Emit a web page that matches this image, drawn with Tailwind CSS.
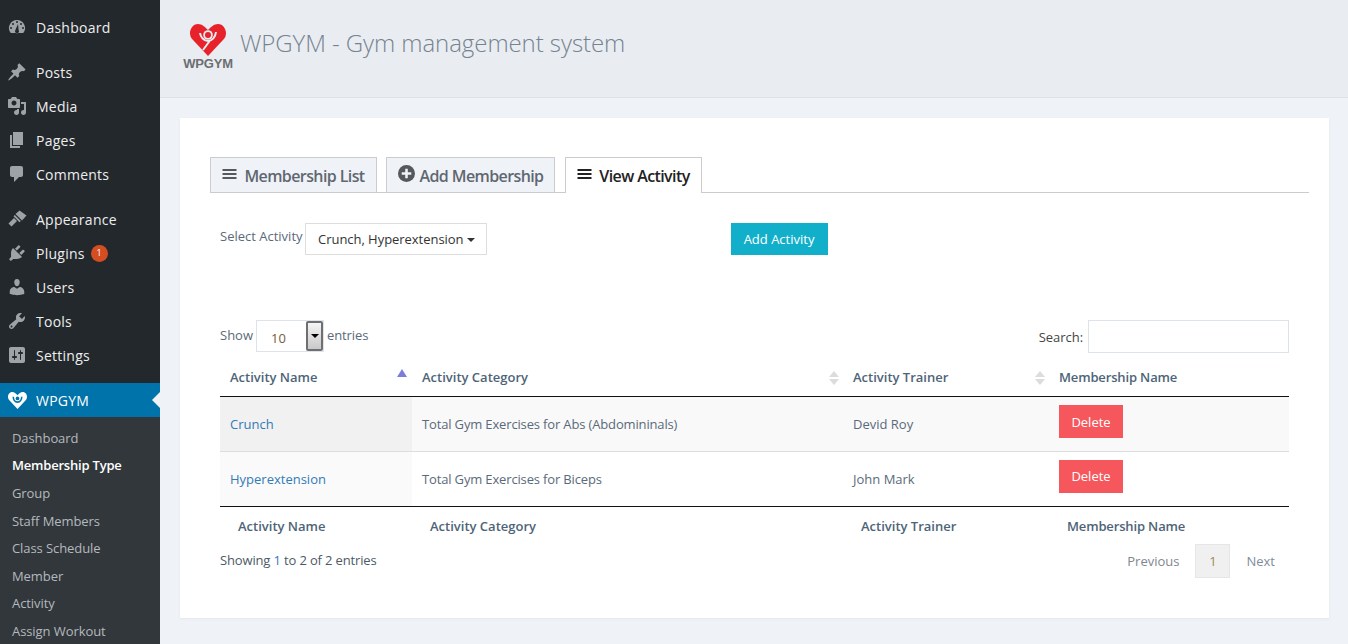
<!DOCTYPE html>
<html lang="en">
<head>
<meta charset="utf-8">
<title>WPGYM</title>
<script src="https://cdn.jsdelivr.net/npm/@tailwindcss/browser@4"></script>
</head>
<body class="bg-[#eff3f8] font-['Open_Sans',sans-serif] text-[#5a6a7a] overflow-hidden">
<div class="flex w-[1348px] h-[644px] overflow-hidden">
  <aside class="w-[160px] shrink-0 bg-[#23282d] text-[#eeeeee] text-[14px] tracking-[0.25px] overflow-hidden">
    <nav class="pt-[11px]">
      <a class="flex items-center h-[34px] pb-[2px]"><span class="w-[36px] pl-[7px]"><svg viewBox="0 0 20 20" class="block w-[20px] h-[20px] fill-[#9ea3a8]"><path fill-rule="evenodd" d="M10 3a8 8 0 0 0-6.240 13h12.480A8 8 0 0 0 10 3zM10 4a1 1 0 1 1 0 2 1 1 0 0 1 0-2zM6 6a1 1 0 1 1 0 2 1 1 0 0 1 0-2zM14 6a1 1 0 1 1 0 2 1 1 0 0 1 0-2zM4 10a1 1 0 1 1 0 2 1 1 0 0 1 0-2zM16 10a1 1 0 1 1 0 2 1 1 0 0 1 0-2zM11 7l.6 6a2 2 0 1 1-3.200 0z"/></svg></span>Dashboard</a>
      <div class="h-[11px]"></div>
      <a class="flex items-center h-[34px] pb-[2px]"><span class="w-[36px] pl-[7px]"><svg viewBox="0 0 20 20" class="block w-[20px] h-[20px] fill-[#9ea3a8]"><path d="M10.440 3.020l1.820-1.820 6.360 6.350-1.830 1.820c-1.050-.68-2.480-.57-3.410.36l-.75.75c-.92.93-1.040 2.350-.35 3.410l-1.830 1.820-2.410-2.410-2.800 2.790c-.42.42-3.380 2.710-3.800 2.290s1.860-3.390 2.280-3.810l2.790-2.790L4.100 9.360l1.830-1.820c1.050.69 2.480.57 3.400-.36l.75-.75c.93-.92 1.050-2.350.36-3.410z"/></svg></span>Posts</a>
      <a class="flex items-center h-[34px] pb-[2px]"><span class="w-[36px] pl-[7px]"><svg viewBox="0 0 20 20" class="block w-[20px] h-[20px] fill-[#9ea3a8]"><path d="M13 11V4c0-.55-.45-1-1-1h-1.670L9 1H5L3.670 3H2c-.55 0-1 .45-1 1v7c0 .55.45 1 1 1h10c.55 0 1-.45 1-1zM7 4.500c1.380 0 2.500 1.120 2.500 2.500S8.380 9.500 7 9.500 4.500 8.380 4.500 7 5.620 4.500 7 4.500zM14 6h5v10.500c0 1.380-1.120 2.500-2.500 2.500S14 17.880 14 16.500s1.120-2.500 2.500-2.500c.17 0 .34.020.5.050V8h-3V6zm-4 8.050V13h2v3.500c0 1.380-1.120 2.500-2.500 2.500S7 17.880 7 16.500 8.120 14 9.500 14c.17 0 .34.020.5.050z"/></svg></span>Media</a>
      <a class="flex items-center h-[34px] pb-[2px]"><span class="w-[36px] pl-[7px]"><svg viewBox="0 0 20 20" class="block w-[20px] h-[20px] fill-[#9ea3a8]"><path d="M6 15V2h10v13H6zm-1 1h8v2H3V5h2v11z"/></svg></span>Pages</a>
      <a class="flex items-center h-[34px] pb-[2px]"><span class="w-[36px] pl-[7px]"><svg viewBox="0 0 20 20" class="block w-[20px] h-[20px] fill-[#9ea3a8]"><path d="M5 2h9c1.100 0 2 .9 2 2v7c0 1.100-.9 2-2 2h-2l-5 5v-5H5c-1.100 0-2-.9-2-2V4c0-1.100.9-2 2-2z"/></svg></span>Comments</a>
      <div class="h-[11px]"></div>
      <a class="flex items-center h-[34px] pb-[2px]"><span class="w-[36px] pl-[7px]"><svg viewBox="0 0 20 20" class="block w-[20px] h-[20px] fill-[#9ea3a8]"><path d="M8.500 5L12.500 1.500 19.500 6.500 15 11.500z"/><path d="M7.800 6l6 6-1.300 1.200-6-6z"/><path d="M7 9l3 3-5.500 5.500-3-3z"/></svg></span>Appearance</a>
      <a class="flex items-center h-[34px] pb-[2px]"><span class="w-[36px] pl-[7px]"><svg viewBox="0 0 20 20" class="block w-[20px] h-[20px] fill-[#9ea3a8]"><path d="M13.110 4.360L9.870 7.600 8 5.730l3.240-3.240c.35-.34 1.050-.2 1.560.32.52.51.66 1.210.31 1.550zm-8 1.770l.91-1.120 9.010 9.010-1.190.84c-.71.71-2.630 1.160-3.820 1.160H6.140L4.900 17.260c-.59.59-1.540.59-2.120 0-.59-.58-.59-1.530 0-2.120l1.240-1.240v-3.880c0-1.130.4-3.190 1.090-3.890zm7.260 3.970l3.240-3.240c.34-.35 1.040-.21 1.550.31.52.51.66 1.210.31 1.550l-3.240 3.250z"/></svg></span>Plugins<span class="ml-[6px] w-[17px] h-[17px] rounded-full bg-[#d54e21] text-white text-[9px] tracking-normal flex items-center justify-center">1</span></a>
      <a class="flex items-center h-[34px] pb-[2px]"><span class="w-[36px] pl-[7px]"><svg viewBox="0 0 20 20" class="block w-[20px] h-[20px] fill-[#9ea3a8]"><path d="M10 9.250c-2.270 0-2.730-3.440-2.730-3.440C7 4.020 7.820 2 9.970 2c2.160 0 2.980 2.020 2.710 3.810 0 0-.41 3.440-2.680 3.440zm0 2.570L12.720 10c2.390 0 4.520 2.330 4.520 4.530v2.490s-3.650 1.130-7.240 1.130c-3.650 0-7.240-1.130-7.240-1.130v-2.490c0-2.250 1.940-4.480 4.470-4.480z"/></svg></span>Users</a>
      <a class="flex items-center h-[34px] pb-[2px]"><span class="w-[36px] pl-[7px]"><svg viewBox="0 0 20 20" class="block w-[20px] h-[20px] fill-[#9ea3a8]"><path d="M16.680 9.770c-1.340 1.340-3.300 1.670-4.950.99l-5.410 6.520c-.99.99-2.590.99-3.580 0s-.99-2.590 0-3.570l6.520-5.420c-.68-1.650-.35-3.610.99-4.950 1.280-1.280 3.120-1.620 4.720-1.060l-2.890 2.890 2.820 2.820 2.860-2.870c.53 1.580.18 3.390-1.080 4.650zM3.810 16.210c.4.390 1.030.39 1.420 0 .4-.4.4-1.030 0-1.430-.39-.39-1.020-.39-1.420 0-.39.4-.39 1.030 0 1.430z"/></svg></span>Tools</a>
      <a class="flex items-center h-[34px] pb-[2px]"><span class="w-[36px] pl-[7px]"><svg viewBox="0 0 20 20" class="block w-[20px] h-[20px] fill-[#9ea3a8]"><path d="M18 16V4c0-1.100-.9-2-2-2H4c-1.100 0-2 .9-2 2v12c0 1.100.9 2 2 2h12c1.100 0 2-.9 2-2zM8 11h1c.55 0 1 .45 1 1s-.45 1-1 1H8v1.500c0 .28-.22.5-.5.5s-.5-.22-.5-.5V13H6c-.55 0-1-.45-1-1s.45-1 1-1h1V5.500c0-.28.22-.5.5-.5s.5.22.5.5V11zm5-2h-1c-.55 0-1-.45-1-1s.45-1 1-1h1V5.500c0-.28.22-.5.5-.5s.5.22.5.5V7h1c.55 0 1 .45 1 1s-.45 1-1 1h-1v5.500c0 .28-.22.5-.5.5s-.5-.22-.5-.5V9z"/></svg></span>Settings</a>
      <div class="h-[10px]"></div>
      <a class="relative flex items-center h-[34px] bg-[#0073aa] text-white"><span class="w-[36px] pl-[8px]"><svg viewBox="0 0 36 32" class="block w-[19px] h-[17px]"><path fill="#fff" d="M8 0C12 0 15 3 18 6C21 3 24 0 28 0C33 0 36 5 36 9C36 12 35 14 33 16L18 32L3 16C1 14 0 12 0 9C0 5 3 0 8 0z"/><circle cx="18" cy="12" r="3.500" fill="#0073aa"/><path fill="none" stroke="#0073aa" stroke-width="3" d="M10 9C10 14 13 19 18 19C23 19 26 14 26 9"/></svg></span>WPGYM<span class="absolute right-0 top-[9px] w-0 h-0 border-y-[8px] border-y-transparent border-r-[8px] border-r-[#eff3f8]"></span></a>
    </nav>
    <ul class="bg-[#32373c] pt-[8px] pb-[20px] text-[13px] leading-[27px] tracking-[-0.08px] text-[#b4b9be]">
      <li class="h-[27px] pl-[12px]">Dashboard</li>
      <li class="h-[28px] pl-[12px] text-white font-semibold tracking-[-0.2px]">Membership Type</li>
      <li class="h-[28px] pl-[12px]">Group</li>
      <li class="h-[27px] pl-[12px]">Staff Members</li>
      <li class="h-[28px] pl-[12px]">Class Schedule</li>
      <li class="h-[27px] pl-[12px]">Member</li>
      <li class="h-[28px] pl-[12px]">Activity</li>
      <li class="h-[27px] pl-[12px]">Assign Workout</li>
    </ul>
  </aside>
  <main class="flex-1 min-w-0">
    <header class="h-[98px] bg-[#e9edf2] border-b border-[#dfe3e8] flex items-start pl-[22px]">
      <div class="w-[52px] mt-[24px] flex flex-col items-center">
        <svg viewBox="0 0 36 32" class="block w-[36px] h-[32px]"><path fill="#e8222a" d="M8 0C12 0 15 3 18 6C21 3 24 0 28 0C33 0 36 5 36 9C36 12 35 14 33 16L18 32L3 16C1 14 0 12 0 9C0 5 3 0 8 0z"/><circle cx="18" cy="11" r="4.800" fill="#e9edf2"/><circle cx="18" cy="11" r="3" fill="#e8222a"/><path fill="none" stroke="#e9edf2" stroke-width="2" d="M10 9C10.500 13 14 17 18 17C22 17 25.500 13 26 8M20 16.500L13 26"/></svg>
        <span class="font-['Liberation_Sans',sans-serif] font-bold text-[13px] leading-[13px] tracking-[-0.2px] text-[#6d6e71] mt-[1px]">WPGYM</span>
      </div>
      <h1 class="ml-[6px] mt-[26px] text-[24px] leading-[33px] tracking-[-0.07px] font-light text-[#76838f]">WPGYM - Gym management system</h1>
    </header>
    <section class="ml-[20px] mt-[20px] w-[1149px] h-[500px] bg-white shadow-[0_1px_3px_rgba(0,0,0,0.05)] pl-[30px] pr-[20px] pt-[39px]">
      <div class="flex items-end h-[36px] border-b border-[#cccccc] text-[16px] tracking-[-0.6px] font-semibold">
        <a class="flex items-center h-[35px] pt-[2px] w-[167px] justify-center gap-[7px] bg-[#eff3f8] border border-b-0 border-[#cccccc] text-[#5f6770]"><svg viewBox="0 0 14 14" class="w-[15px] h-[14px] fill-[#55595e] -mt-[5px]"><path d="M0 2h14v2H0zM0 6h14v2H0zM0 10h14v2H0z"/></svg>Membership List</a>
        <a class="ml-[9px] flex items-center h-[35px] pt-[2px] w-[169px] justify-center gap-[5px] bg-[#eff3f8] border border-b-0 border-[#cccccc] text-[#5f6770]"><svg viewBox="0 0 16 16" class="w-[17px] h-[17px] -mt-[5px]"><circle cx="8" cy="8" r="8" fill="#55595e"/><path fill="#eff3f8" d="M6.800 3.500h2.400v3.300h3.300v2.400H9.200v3.300H6.800V9.200H3.500V6.800h3.300z"/></svg>Add Membership</a>
        <a class="ml-[10px] flex items-center h-[36px] pt-[1px] -mb-px w-[137px] justify-center gap-[7px] bg-white border border-b-0 border-[#cccccc] text-[#222222]"><svg viewBox="0 0 14 14" class="w-[15px] h-[14px] fill-[#222222] -mt-[5px]"><path d="M0 2h14v2H0zM0 6h14v2H0zM0 10h14v2H0z"/></svg>View Activity</a>
      </div>
      <div class="relative flex items-start pl-[10px] pt-[30px] h-[127px] text-[13px]">
        <span class="mt-[4px] text-[#5a6a7a]">Select Activity</span>
        <button class="ml-[2px] h-[32px] w-[182px] pt-[2px] pl-[12.500px] border border-[#dddddd] bg-white text-[#333333] flex items-center justify-start gap-[3px] tracking-[-0.04px]">Crunch, Hyperextension<span class="w-0 h-0 border-x-[4px] border-x-transparent border-t-[4px] border-t-[#333333]"></span></button>
        <button class="ml-[244px] h-[32px] w-[97px] pt-[2px] bg-[#12afcb] text-white text-[13px]">Add Activity</button>
      </div>
      <div class="flex items-start justify-between pl-[10px] pr-[20px] h-[40px] text-[13px]">
        <div class="flex items-center h-[32px]">
          <span class="-mt-[1px]">Show</span>
          <span class="relative ml-[3px] w-[68px] h-[32px] border border-[#dde3e8] bg-white text-[#7a5a3a] pl-[14px] leading-[34px] text-[13px]">10
            <span class="absolute right-0 top-0 w-[17px] h-[30px] border-2 border-[#6f6f6f] rounded-[2px] bg-linear-to-b from-[#f4f4f4] to-[#c9c9c9] flex items-center justify-center"><span class="w-0 h-0 border-x-[4px] border-x-transparent border-t-[4px] border-t-black"></span></span>
          </span>
          <span class="ml-[3px] -mt-[1px] tracking-[-0.1px]">entries</span>
        </div>
        <div class="flex items-center h-[33px]"><span class="mr-[5px] mt-[2px] text-[#444444] tracking-[-0.05px]">Search:</span><span class="w-[201px] h-[33px] border border-[#dde3e8] bg-white"></span></div>
      </div>
      <table class="w-[1069px] ml-[10px] mr-[20px] table-fixed border-collapse text-[13px]">
        <colgroup><col class="w-[192px]"><col class="w-[431px]"><col class="w-[206px]"><col></colgroup>
        <thead>
          <tr class="h-[36px] text-left font-semibold text-[#4d6478] border-b border-[#111111]">
            <th class="relative pl-[10px] font-semibold">Activity Name<span class="absolute right-[5px] top-[9px] w-0 h-0 border-x-[5px] border-x-transparent border-b-[8px] border-b-[#7b7fdb]"></span></th>
            <th class="relative pl-[10px] font-semibold">Activity Category<span class="absolute right-[4px] top-[11px] w-0 h-0 border-x-[5px] border-x-transparent border-b-[6px] border-b-[#dcdcdc]"></span><span class="absolute right-[4px] top-[19px] w-0 h-0 border-x-[5px] border-x-transparent border-t-[6px] border-t-[#dcdcdc]"></span></th>
            <th class="relative pl-[10px] font-semibold">Activity Trainer<span class="absolute right-[4px] top-[11px] w-0 h-0 border-x-[5px] border-x-transparent border-b-[6px] border-b-[#dcdcdc]"></span><span class="absolute right-[4px] top-[19px] w-0 h-0 border-x-[5px] border-x-transparent border-t-[6px] border-t-[#dcdcdc]"></span></th>
            <th class="pl-[10px] font-semibold tracking-[-0.15px]">Membership Name</th>
          </tr>
        </thead>
        <tbody>
          <tr class="h-[55px] bg-[#f9f9f9] border-b border-[#dddddd]">
            <td class="pl-[10px] pt-[2px] bg-[#f1f1f1] text-[#337ab7]">Crunch</td>
            <td class="pl-[10px] pt-[2px] tracking-[-0.15px]">Total Gym Exercises for Abs (Abdomininals)</td>
            <td class="pl-[10px] pt-[2px]">Devid Roy</td>
            <td class="pl-[10px]"><button class="w-[64px] h-[33px] pt-[4px] bg-[#f5575c] text-white block -mt-[5px]">Delete</button></td>
          </tr>
          <tr class="h-[55px] border-b border-[#111111]">
            <td class="pl-[10px] pt-[2px] bg-[#fafafa] text-[#337ab7]">Hyperextension</td>
            <td class="pl-[10px] pt-[2px] tracking-[-0.15px]">Total Gym Exercises for Biceps</td>
            <td class="pl-[10px] pt-[2px]">John Mark</td>
            <td class="pl-[10px]"><button class="w-[64px] h-[33px] pt-[2px] bg-[#f5575c] text-white block -mt-[5px]">Delete</button></td>
          </tr>
        </tbody>
        <tfoot>
          <tr class="h-[39px] text-left font-semibold text-[#4d6478]">
            <th class="pl-[18px] pt-[2px] font-semibold">Activity Name</th>
            <th class="pl-[18px] pt-[2px] font-semibold">Activity Category</th>
            <th class="pl-[18px] pt-[2px] font-semibold">Activity Trainer</th>
            <th class="pl-[18px] pt-[2px] font-semibold tracking-[-0.15px]">Membership Name</th>
          </tr>
        </tfoot>
      </table>
      <div class="flex items-start justify-between pl-[10px] pr-[20px] text-[13px]">
        <span class="mt-[6px] text-[#4d5a66] tracking-[-0.15px]">Showing <span class="text-[#337ab7]">1</span> to 2 of 2 entries</span>
        <div class="flex items-center h-[34px] -mt-px">
          <span class="mr-[16px] pt-[2px] text-[#7f878f]">Previous</span>
          <span class="w-[35px] h-[34px] pt-[2px] bg-[#f0f0f0] border border-[#e6e6e6] flex items-center justify-center text-[#a08a50]">1</span>
          <span class="ml-[16px] mr-[14px] pt-[2px] text-[#7f8c98]">Next</span>
        </div>
      </div>
    </section>
  </main>
</div>
</body>
</html>
